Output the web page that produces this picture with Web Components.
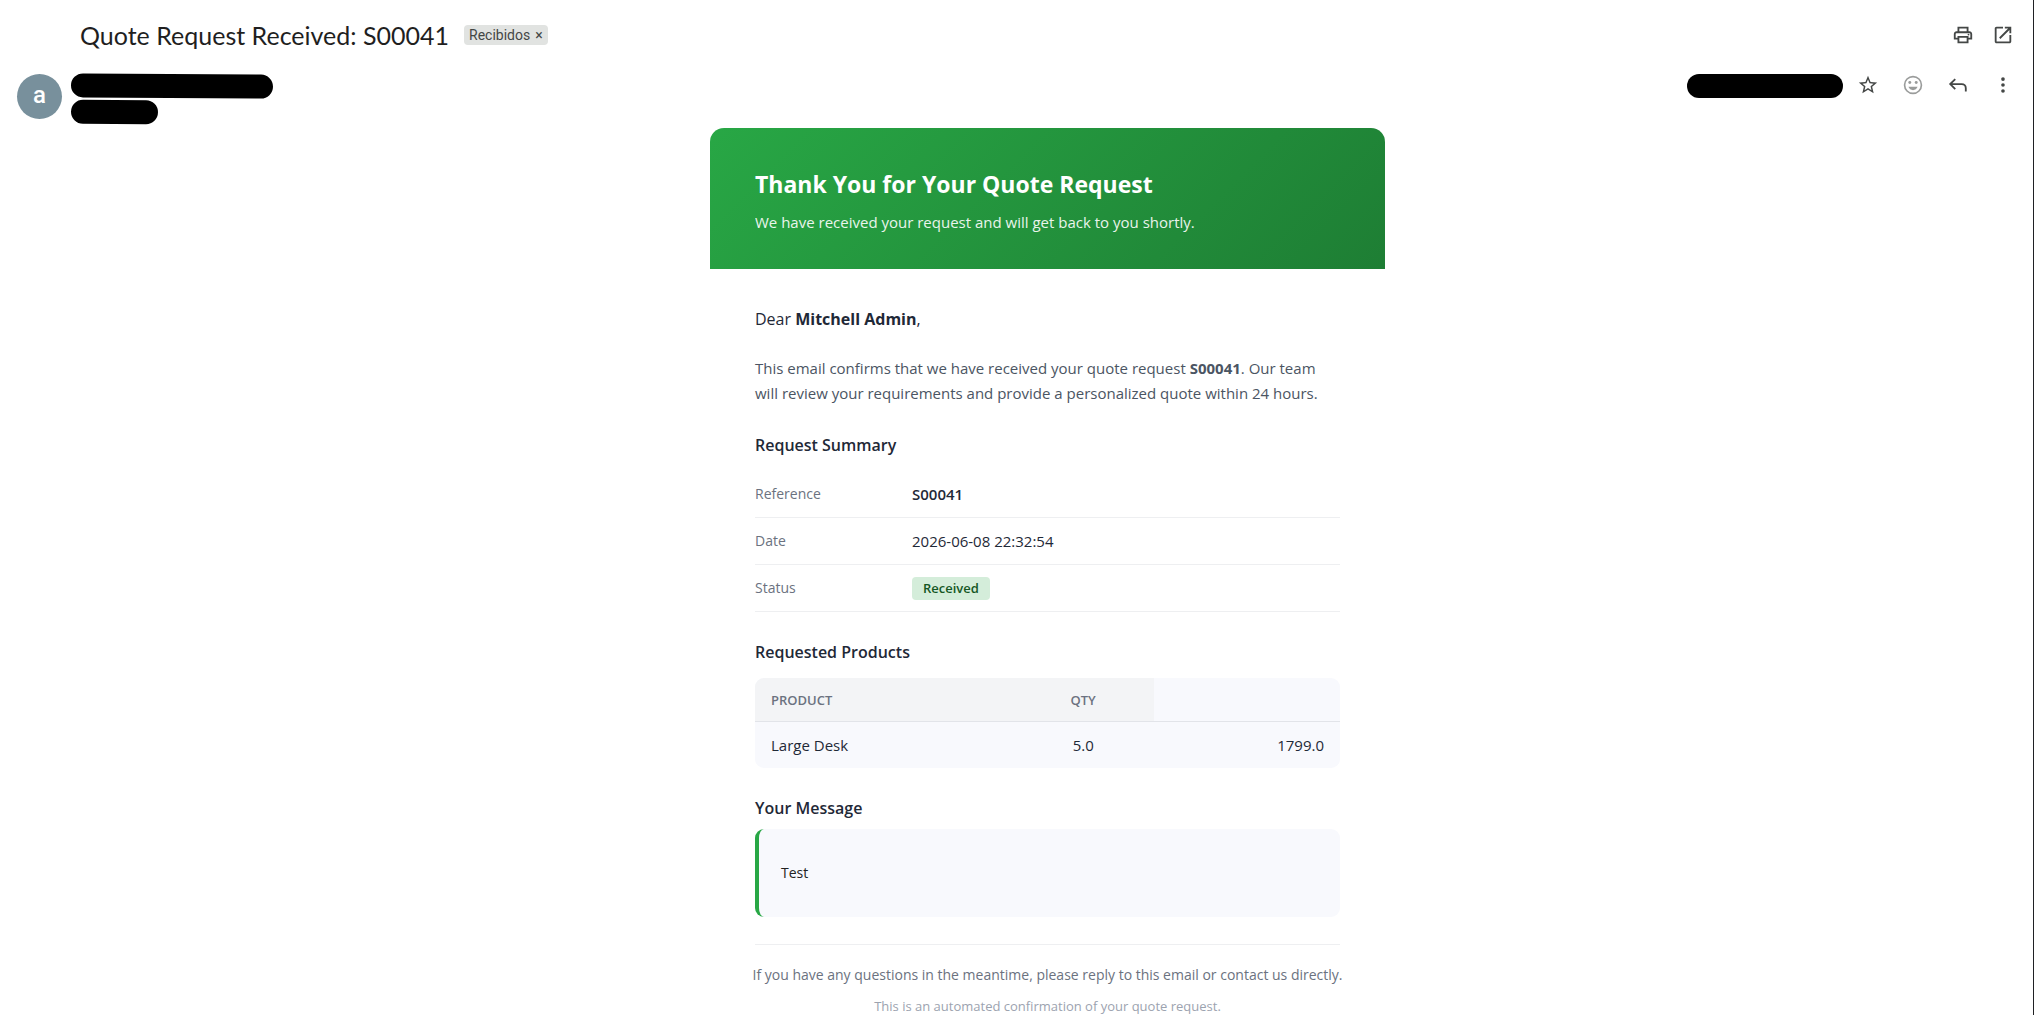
<!DOCTYPE html>
<html lang="es">
<head>
<meta charset="utf-8">
<title>Quote Request Received: S00041</title>
<style>
    body {
        margin: 0;
        background: #fff;
        font-family: "Open Sans", "Noto Sans", sans-serif;
        color: #1f2937;
    }
</style>
</head>
<body>
<mail-view>
    <mail-subject slot="subject" label="Recibidos">Quote Request Received: S00041</mail-subject>
    <mail-sender slot="sender" initial="a"></mail-sender>
    <quote-email>
        <span slot="title">Thank You for Your Quote Request</span>
        <span slot="subtitle">We have received your request and will get back to you shortly.</span>
        <span slot="greeting">Dear <b>Mitchell Admin</b>,</span>
        <span slot="intro">This email confirms that we have received your quote request <b>S00041</b>. Our team will review your requirements and provide a personalized quote within 24 hours.</span>
        <email-section heading="Request Summary">
            <request-summary></request-summary>
        </email-section>
        <email-section heading="Requested Products">
            <product-table></product-table>
        </email-section>
        <email-section heading="Your Message" tight>
            <message-quote>Test</message-quote>
        </email-section>
        <span slot="footer">If you have any questions in the meantime, please reply to this email or contact us directly.</span>
        <span slot="note">This is an automated confirmation of your quote request.</span>
    </quote-email>
</mail-view>

<script>
//@ts-check

function html(strings, ...values) {
    return String.raw({ raw: strings }, ...values);
}

/**
 * @param {string} s
 */
function createTemplate(s) {
    const template = document.createElement("template");
    template.innerHTML = s;
    return template;
}

// 24x24 icon shapes
const ICONS = {
    print: `<path d="M19 8h-1V3H6v5H5c-1.66 0-3 1.34-3 3v6h4v4h12v-4h4v-6c0-1.66-1.34-3-3-3zM8 5h8v3H8V5zm8 14H8v-4h8v4zm2-4v-2H6v2H4v-4c0-.55.45-1 1-1h14c.55 0 1 .45 1 1v4h-2z"/><circle cx="18" cy="11.500" r="1"/>`,
    open: `<path d="M19 19H5V5h7V3H5c-1.110 0-2 .9-2 2v14c0 1.100.890 2 2 2h14c1.100 0 2-.9 2-2v-7h-2v7zM14 3v2h3.590l-9.830 9.830 1.410 1.410L19 6.410V10h2V3h-7z"/>`,
    star: `<path d="M22 9.240l-7.190-.620L12 2 9.190 8.630 2 9.240l5.460 4.730L5.820 21 12 17.270 18.180 21l-1.630-7.030L22 9.240zM12 15.400l-3.760 2.270 1-4.280-3.320-2.880 4.380-.380L12 6.100l1.710 4.040 4.380.380-3.320 2.880 1 4.280L12 15.400z"/>`,
    smile: `<circle cx="12" cy="12" r="9.200" fill="none" stroke="currentColor" stroke-width="1.800"/><circle cx="8.500" cy="9.300" r="1.600"/><circle cx="15.500" cy="9.300" r="1.600"/><path d="M7 14h10c-.8 2.200-2.700 3.600-5 3.600S7.800 16.200 7 14z"/>`,
    reply: `<path d="M9 5.500L3.500 11 9 16.500M3.500 11H16c2.600 0 4.500 1.900 4.500 4.500V19" fill="none" stroke="currentColor" stroke-width="2"/>`,
    more: `<circle cx="12" cy="5.500" r="2"/><circle cx="12" cy="12" r="2"/><circle cx="12" cy="18.500" r="2"/>`,
};

// ***** COMPONENTS *****

class BaseElement extends HTMLElement {
    /** @type {HTMLTemplateElement} */
    static template;

    constructor() {
        super();
        const root = this.attachShadow({ mode: "open" });
        root.appendChild(/** @type any */(this.constructor).template.content.cloneNode(true));
    }

    /**
     * Get element in shadow dom
     *
     * @param {string} id
     */
    EL(id) {
        return /** @type HTMLElement */(this.shadowRoot?.getElementById(id));
    }
}

/** Round toolbar button, icon picked by name */
class IconButton extends BaseElement {
    static template = createTemplate(html`
        <style>
            :host { display: block; color: #444746; }
            :host([muted]) { color: #9a9c9b; }
            button {
                display: grid;
                place-items: center;
                width: 45px;
                height: 22px;
                padding: 0;
                border: 0;
                background: none;
                color: inherit;
                cursor: pointer;
            }
            svg { width: 22px; height: 22px; fill: currentColor; }
        </style>
        <button id="button" type="button"><svg id="icon" viewBox="0 0 24 24" aria-hidden="true"></svg></button>
    `);

    connectedCallback() {
        this.EL("icon").innerHTML = ICONS[this.getAttribute("icon") || "more"];
        this.EL("button").setAttribute("aria-label", this.getAttribute("label") || "");
    }
}
customElements.define("icon-button", IconButton);

/** Blacked out piece of text, width from --w */
class InkMark extends BaseElement {
    static template = createTemplate(html`
        <style>
            :host {
                display: block;
                width: var(--w);
                height: 24px;
                border-radius: 12px;
                background: #000;
            }
            :host([tilt]) { transform: rotate(0.4deg); }
        </style>
    `);
}
customElements.define("ink-mark", InkMark);

/** Subject line with the folder chip */
class MailSubject extends BaseElement {
    static template = createTemplate(html`
        <style>
            :host {
                display: flex;
                align-items: center;
                height: 70px;
                padding: 0 8px 0 80px;
            }
            h1 {
                margin: 0;
                font: 400 25px/32px Lato, sans-serif;
                color: #1f1f1f;
            }
            #chip {
                display: flex;
                align-items: center;
                gap: 5px;
                height: 20px;
                margin-left: 15px;
                padding: 0 5px;
                border-radius: 4px;
                background: #e1e3e1;
                font: 14px/20px Roboto, sans-serif;
                color: #444746;
            }
            #chip button {
                padding: 0;
                border: 0;
                background: none;
                color: inherit;
                font: inherit;
            }
            #tools { display: flex; margin-left: auto; }
            #tools icon-button + icon-button { margin-left: -5px; }
        </style>
        <h1><slot></slot></h1>
        <div id="chip"><span id="label"></span><button type="button">×</button></div>
        <div id="tools">
            <icon-button icon="print" label="Imprimir"></icon-button>
            <icon-button icon="open" label="Abrir"></icon-button>
        </div>
    `);

    connectedCallback() {
        this.EL("label").textContent = this.getAttribute("label");
    }
}
customElements.define("mail-subject", MailSubject);

/** Avatar, sender and message actions */
class MailSender extends BaseElement {
    static template = createTemplate(html`
        <style>
            :host {
                display: flex;
                align-items: flex-start;
                height: 54px;
                padding: 4px 8px 0 17px;
            }
            #avatar {
                width: 45px;
                height: 45px;
                border-radius: 50%;
                background: #78909c;
                color: #fff;
                font: 500 24px/43px Roboto, sans-serif;
                text-align: center;
            }
            #names { display: grid; gap: 2px; margin-left: 9px; }
            #tools { display: flex; margin-left: auto; }
            #tools ink-mark { margin-right: 2px; }
        </style>
        <div id="avatar"></div>
        <div id="names">
            <ink-mark tilt style="--w: 202px"></ink-mark>
            <ink-mark tilt style="--w: 87px"></ink-mark>
        </div>
        <div id="tools">
            <ink-mark style="--w: 156px"></ink-mark>
            <icon-button icon="star" label="Destacar"></icon-button>
            <icon-button icon="smile" label="Reaccionar" muted></icon-button>
            <icon-button icon="reply" label="Responder"></icon-button>
            <icon-button icon="more" label="Más"></icon-button>
        </div>
    `);

    connectedCallback() {
        this.EL("avatar").textContent = this.getAttribute("initial");
    }
}
customElements.define("mail-sender", MailSender);

/** Heading plus content */
class EmailSection extends BaseElement {
    static template = createTemplate(html`
        <style>
            :host { display: block; margin-top: 28px; }
            h2 {
                margin: 0 0 14px;
                font-size: 16px;
                line-height: 24px;
                font-weight: 600;
            }
            :host([tight]) h2 { margin-bottom: 9px; }
        </style>
        <h2 id="heading"></h2>
        <slot></slot>
    `);

    connectedCallback() {
        this.EL("heading").textContent = this.getAttribute("heading");
    }
}
customElements.define("email-section", EmailSection);

class RequestSummary extends BaseElement {
    static template = createTemplate(html`
        <style>
            :host { display: block; }
            table {
                width: 100%;
                border-collapse: separate;
                border-spacing: 0;
                font-size: 15px;
                line-height: 22px;
            }
            th, td {
                height: 46px;
                padding: 0;
                border-bottom: 1px solid #eeeff1;
                text-align: left;
            }
            th {
                width: 157px;
                font-size: 14px;
                font-weight: 500;
                color: #6b7280;
            }
            .strong { font-weight: 600; }
            .badge {
                display: inline-block;
                padding: 0 11px;
                border-radius: 4px;
                background: #d4edda;
                color: #155724;
                font-size: 13px;
                line-height: 23px;
                font-weight: 600;
            }
        </style>
        <table>
            <tr><th scope="row">Reference</th><td class="strong">S00041</td></tr>
            <tr><th scope="row">Date</th><td>2026-06-08 22:32:54</td></tr>
            <tr><th scope="row">Status</th><td><span class="badge">Received</span></td></tr>
        </table>
    `);
}
customElements.define("request-summary", RequestSummary);

class ProductTable extends BaseElement {
    static template = createTemplate(html`
        <style>
            :host {
                display: block;
                overflow: hidden;
                border-radius: 9px;
                background: #f8f9fd;
            }
            table {
                width: 100%;
                table-layout: fixed;
                border-collapse: separate;
                border-spacing: 0;
                font-size: 15px;
                line-height: 22px;
            }
            th, td { padding: 0 16px; text-align: left; }
            th {
                height: 43px;
                background: #f3f4f6;
                color: #6b7280;
                font-size: 13px;
                font-weight: 600;
            }
            thead th, thead td { border-bottom: 1px solid #e2e4e9; }
            tbody td { height: 46px; }
            .name { width: 44%; }
            .total { width: 186px; }
            .center { text-align: center; }
            .right { text-align: right; }
        </style>
        <table>
            <colgroup><col class="name"><col><col class="total"></colgroup>
            <thead><tr><th>PRODUCT</th><th class="center">QTY</th><td></td></tr></thead>
            <tbody><tr><td>Large Desk</td><td class="center">5.0</td><td class="right">1799.0</td></tr></tbody>
        </table>
    `);
}
customElements.define("product-table", ProductTable);

class MessageQuote extends BaseElement {
    static template = createTemplate(html`
        <style>
            :host {
                display: block;
                padding: 32px 22px;
                border-left: 4px solid #28a745;
                border-radius: 9px;
                background: #f8f9fd;
                color: #222;
                font-size: 14px;
                line-height: 24px;
            }
        </style>
        <slot></slot>
    `);
}
customElements.define("message-quote", MessageQuote);

/** The email itself */
class QuoteEmail extends BaseElement {
    static template = createTemplate(html`
        <style>
            :host { display: block; max-width: 675px; margin: 0 auto; }
            header {
                padding: 39px 45px 35px;
                border-radius: 14px 14px 0 0;
                background: linear-gradient(135deg, #28a745 0%, #1e7e34 100%);
                color: #fff;
            }
            h1 { margin: 0; font-size: 23px; line-height: 34px; font-weight: 700; }
            header p { margin: 9px 0 0; font-size: 15px; line-height: 24px; opacity: 0.9; }
            #body { padding: 38px 45px 0; }
            #body p { margin: 0; font-size: 16px; line-height: 24px; }
            #body #intro { margin: 25px 0 27px; font-size: 15px; line-height: 25px; color: #4b5563; }
            ::slotted(email-section:first-of-type) { margin-top: 0; }
            footer {
                display: flex;
                flex-direction: column;
                align-items: center;
                margin-top: 27px;
                padding-top: 18px;
                border-top: 1px solid #eeeff1;
            }
            #body #contact { font-size: 14px; white-space: nowrap; color: #6b7280; }
            #body #note { margin-top: 11px; font-size: 13px; line-height: 16px; color: #9ca3af; }
        </style>
        <header>
            <h1><slot name="title"></slot></h1>
            <p><slot name="subtitle"></slot></p>
        </header>
        <div id="body">
            <p><slot name="greeting"></slot></p>
            <p id="intro"><slot name="intro"></slot></p>
            <slot></slot>
            <footer>
                <p id="contact"><slot name="footer"></slot></p>
                <p id="note"><slot name="note"></slot></p>
            </footer>
        </div>
    `);
}
customElements.define("quote-email", QuoteEmail);

/** Reading pane */
class MailView extends BaseElement {
    static template = createTemplate(html`
        <style>
            :host {
                display: block;
                box-sizing: border-box;
                min-height: 100vh;
                border-right: 1px solid #202124;
            }
            /* the message column is centred past the avatar gutter */
            main { padding-left: 62px; }
        </style>
        <slot name="subject"></slot>
        <slot name="sender"></slot>
        <main><slot></slot></main>
    `);
}
customElements.define("mail-view", MailView);
</script>
</body>
</html>
